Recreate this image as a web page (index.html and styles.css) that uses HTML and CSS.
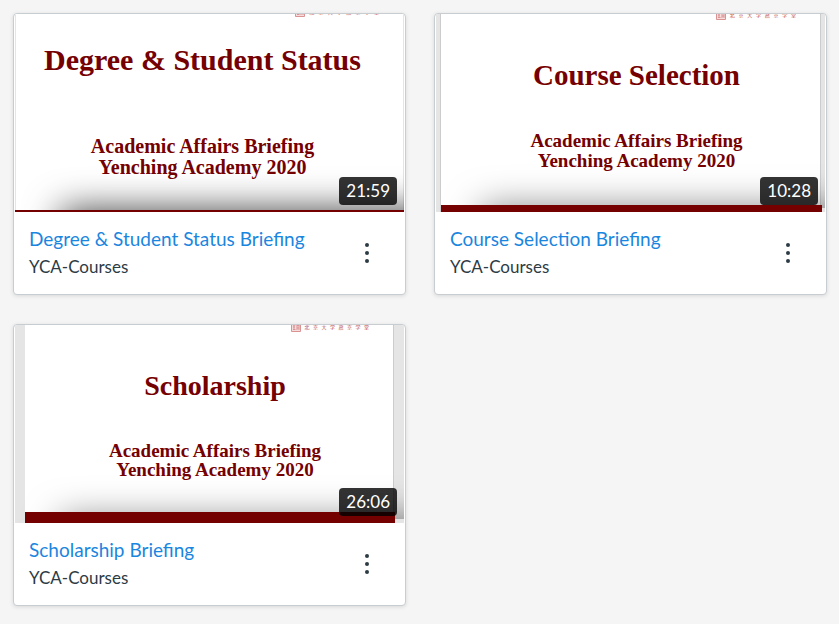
FILE: index.html
```html
<!DOCTYPE html>
<html lang="en">
<head>
  <meta charset="UTF-8">
  <meta name="viewport" content="width=device-width, initial-scale=1">
  <title>YCA-Courses</title>
  <link rel="stylesheet" href="styles.css">
</head>
<body>
  <main class="gallery">
    <article class="card">
      <div class="thumb thumb-degree">
        <div class="slide">
          <div class="logo">
            <svg class="seal" viewBox="0 0 10 10"><path d="M.5.5h9v9h-9zM2 3h2.500M2 5h2M2 7.500h2.500M3 2v6M6 2v6M6 3.500h2.500M6 6h2M8 4v4"/></svg>
            <span>北</span><span>京</span><span>大</span><span>学</span><span>燕</span><span>京</span><span>学</span><span>堂</span>
          </div>
          <p class="slide-title">Degree &amp; Student Status</p>
          <p class="slide-sub">Academic Affairs Briefing<br>Yenching Academy 2020</p>
          <div class="bar"></div>
        </div>
        <div class="shade"></div>
        <span class="duration">21:59</span>
      </div>
      <div class="info">
        <div class="text">
          <a class="title" href="#">Degree &amp; Student Status Briefing</a>
          <span class="owner">YCA-Courses</span>
        </div>
        <button class="menu" type="button" aria-label="Options">
          <svg viewBox="0 0 6 22"><circle cx="3" cy="3" r="2"/><circle cx="3" cy="11" r="2"/><circle cx="3" cy="19" r="2"/></svg>
        </button>
      </div>
    </article>

    <article class="card">
      <div class="thumb thumb-course">
        <div class="slide">
          <div class="logo">
            <svg class="seal" viewBox="0 0 10 10"><path d="M.5.5h9v9h-9zM2 3h2.500M2 5h2M2 7.500h2.500M3 2v6M6 2v6M6 3.500h2.500M6 6h2M8 4v4"/></svg>
            <span>北</span><span>京</span><span>大</span><span>学</span><span>燕</span><span>京</span><span>学</span><span>堂</span>
          </div>
          <p class="slide-title">Course Selection</p>
          <p class="slide-sub">Academic Affairs Briefing<br>Yenching Academy 2020</p>
          <div class="bar"></div>
        </div>
        <div class="shade"></div>
        <span class="duration">10:28</span>
      </div>
      <div class="info">
        <div class="text">
          <a class="title" href="#">Course Selection Briefing</a>
          <span class="owner">YCA-Courses</span>
        </div>
        <button class="menu" type="button" aria-label="Options">
          <svg viewBox="0 0 6 22"><circle cx="3" cy="3" r="2"/><circle cx="3" cy="11" r="2"/><circle cx="3" cy="19" r="2"/></svg>
        </button>
      </div>
    </article>

    <article class="card">
      <div class="thumb thumb-scholarship">
        <div class="slide">
          <div class="logo">
            <svg class="seal" viewBox="0 0 10 10"><path d="M.5.5h9v9h-9zM2 3h2.500M2 5h2M2 7.500h2.500M3 2v6M6 2v6M6 3.500h2.500M6 6h2M8 4v4"/></svg>
            <span>北</span><span>京</span><span>大</span><span>学</span><span>燕</span><span>京</span><span>学</span><span>堂</span>
          </div>
          <p class="slide-title">Scholarship</p>
          <p class="slide-sub">Academic Affairs Briefing<br>Yenching Academy 2020</p>
          <div class="bar"></div>
        </div>
        <div class="shade"></div>
        <span class="duration">26:06</span>
      </div>
      <div class="info">
        <div class="text">
          <a class="title" href="#">Scholarship Briefing</a>
          <span class="owner">YCA-Courses</span>
        </div>
        <button class="menu" type="button" aria-label="Options">
          <svg viewBox="0 0 6 22"><circle cx="3" cy="3" r="2"/><circle cx="3" cy="11" r="2"/><circle cx="3" cy="19" r="2"/></svg>
        </button>
      </div>
    </article>
  </main>
</body>
</html>
```
FILE: styles.css
```css
* {
  box-sizing: border-box;
}
body {
  margin: 0;
  padding: 13px 12px 18px 13px;
  background: #f5f5f5;
  color: #2d3b45;
  font-family: Lato, "Liberation Sans", sans-serif;
}
p {
  margin: 0;
}
.gallery {
  display: grid;
  grid-template-columns: repeat(2, minmax(0, 1fr));
  column-gap: 28px;
  row-gap: 29px;
}
.card {
  background: #fff;
  border: 1px solid #c7cdd1;
  border-radius: 4px;
  box-shadow: 0 1px 4px rgba(0, 0, 0, 0.12);
  overflow: hidden;
}

/* thumbnail */
.thumb {
  position: relative;
  display: flex;
  aspect-ratio: 389 / 198;
  margin: 0 1px;
  background: #e5e5e5;
  overflow: hidden;
}
.slide {
  flex: 1;
  display: flex;
  flex-direction: column;
  background: #fff;
  border: solid #ccc;
  border-width: 0 1px;
  color: #750000;
  font-family: Georgia, "Liberation Serif", serif;
  font-weight: bold;
  text-align: center;
}
.logo {
  display: flex;
  align-items: center;
  justify-content: space-between;
  align-self: flex-end;
  width: 80px;
  height: 10px;
  margin-right: 24px;
  color: #b8403d;
  font: 5px/6px "Noto Sans CJK SC", sans-serif;
}
.seal {
  width: 10px;
  height: 10px;
  fill: #f7dede;
  stroke: #d99393;
  stroke-width: 1;
}
.bar {
  position: relative;
  z-index: 1;
  height: 7px;
  margin-top: auto;
  margin-right: -2px;
  background: #750000;
}
/* soft shadow rising from behind the bar */
.shade {
  position: absolute;
  left: 46px;
  right: -40px;
  bottom: -60px;
  height: 64px;
  box-shadow: 0 0 36px rgba(0, 0, 0, 0.5);
}

.thumb-degree .slide {
  border-color: #e5e5e5;
}
.thumb-degree .logo {
  width: 84px;
  margin-top: -7px;
}
.thumb-degree .slide-title {
  margin-top: 25px;
  padding-right: 14px;
  font-size: 30px;
  line-height: 36px;
}
.thumb-degree .slide-sub {
  margin-top: 58px;
  padding-right: 14px;
  font-size: 20px;
  line-height: 21px;
}
.thumb-degree .bar {
  height: 2px;
  margin-right: -1px;
  margin-left: -1px;
}
.thumb-degree .shade {
  bottom: -62px;
  box-shadow: 0 0 36px rgba(0, 0, 0, 0.75);
}

.thumb-course {
  padding: 0 4px;
}
.thumb-course .logo {
  margin-top: -4px;
}
.thumb-course .slide-title {
  margin-top: 37px;
  padding-left: 12px;
  font-size: 29px;
  line-height: 36px;
}
.thumb-course .slide-sub {
  margin-top: 38px;
  padding-left: 12px;
  font-size: 19px;
  line-height: 20px;
}

.thumb-scholarship {
  padding: 0 10px;
}
.thumb-scholarship .slide {
  border-left: 0;
}
.thumb-scholarship .logo {
  width: 78px;
  margin-top: -3px;
}
.thumb-scholarship .slide-title {
  margin-top: 36px;
  padding-left: 12px;
  font-size: 28px;
  line-height: 36px;
}
.thumb-scholarship .slide-sub {
  margin-top: 37px;
  padding-left: 12px;
  font-size: 19px;
  line-height: 19px;
}
.thumb-scholarship .bar {
  height: 11px;
}

.duration {
  position: absolute;
  z-index: 2;
  right: 7px;
  bottom: 7px;
  padding: 0 7px;
  border-radius: 4px;
  background: rgba(0, 0, 0, 0.8);
  color: #fff;
  font-size: 17px;
  line-height: 28px;
}

/* caption under the thumbnail */
.info {
  display: flex;
  align-items: center;
  justify-content: space-between;
  height: 82px;
  padding: 0 23px 0 15px;
}
.text {
  display: flex;
  flex-direction: column;
}
.title {
  color: #1a86e0;
  font-size: 19px;
  line-height: 28px;
  text-decoration: none;
}
.title:hover {
  text-decoration: underline;
}
.owner {
  font-size: 17px;
  line-height: 28px;
}
.menu {
  display: flex;
  align-items: center;
  justify-content: center;
  width: 30px;
  height: 36px;
  padding: 0;
  border: 0;
  background: none;
  cursor: pointer;
}
.menu svg {
  width: 6px;
  height: 22px;
  fill: #2d3b45;
}
```
